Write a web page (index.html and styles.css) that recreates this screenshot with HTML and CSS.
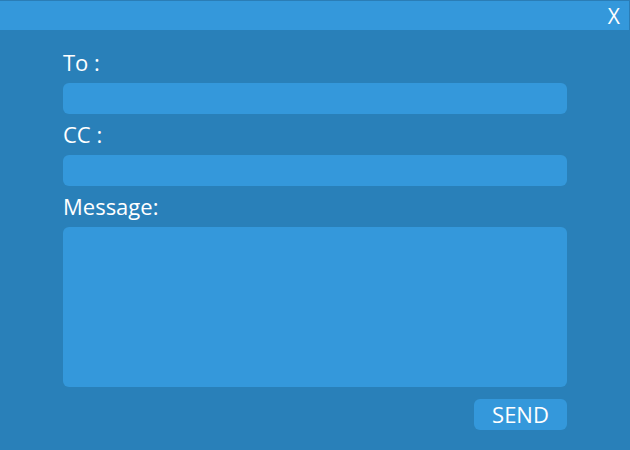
FILE: index.html
```html
<!DOCTYPE html>
<html>
<head>
<meta charset="utf-8">
<link rel="stylesheet" href="styles.css">
</head>
<body>
<div class="window">
  <div class="titlebar"><span class="close">X</span></div>
  <form class="form">
    <label class="label">To :</label>
    <div class="field"></div>
    <label class="label">CC :</label>
    <div class="field"></div>
    <label class="label">Message:</label>
    <div class="field area"></div>
    <div class="actions"><button class="send" type="button">SEND</button></div>
  </form>
</div>
</body>
</html>
```
FILE: styles.css
```css
html, body {
  margin: 0;
  padding: 0;
  background: #2980b9;
  font-family: "Open Sans", "Liberation Sans", sans-serif;
  color: #ffffff;
}
.window {
  width: 630px;
  height: 450px;
  background: #2980b9;
}
.titlebar {
  height: 30px;
  box-sizing: border-box;
  background: #3498db;
  border-top: 1px solid #2a7db6;
  border-right: 1px solid #2a7db6;
  display: flex;
  justify-content: flex-end;
  align-items: center;
  padding-right: 9px;
}
.close {
  font-size: 21px;
  line-height: 28px;
  color: #fff;
}
.titlebar + .form { margin-top: 1px; }
.form {
  display: flex;
  flex-direction: column;
  width: 504px;
  padding: 17px 0 0 63px;
}
.label {
  display: block;
  font-size: 22px;
  line-height: 28px;
  height: 28px;
  margin-bottom: 7px;
}
.field {
  height: 31px;
  background: #3498db;
  border-radius: 6px;
  margin-bottom: 6px;
}
.area {
  height: 160px;
  margin-bottom: 12px;
}
.actions {
  display: flex;
  justify-content: flex-end;
}
.send {
  width: 93px;
  height: 31px;
  border: none;
  border-radius: 6px;
  background: #3498db;
  color: #fff;
  font-family: "Open Sans", "Liberation Sans", sans-serif;
  font-size: 22px;
  padding: 0;
  line-height: 31px;
}
```
